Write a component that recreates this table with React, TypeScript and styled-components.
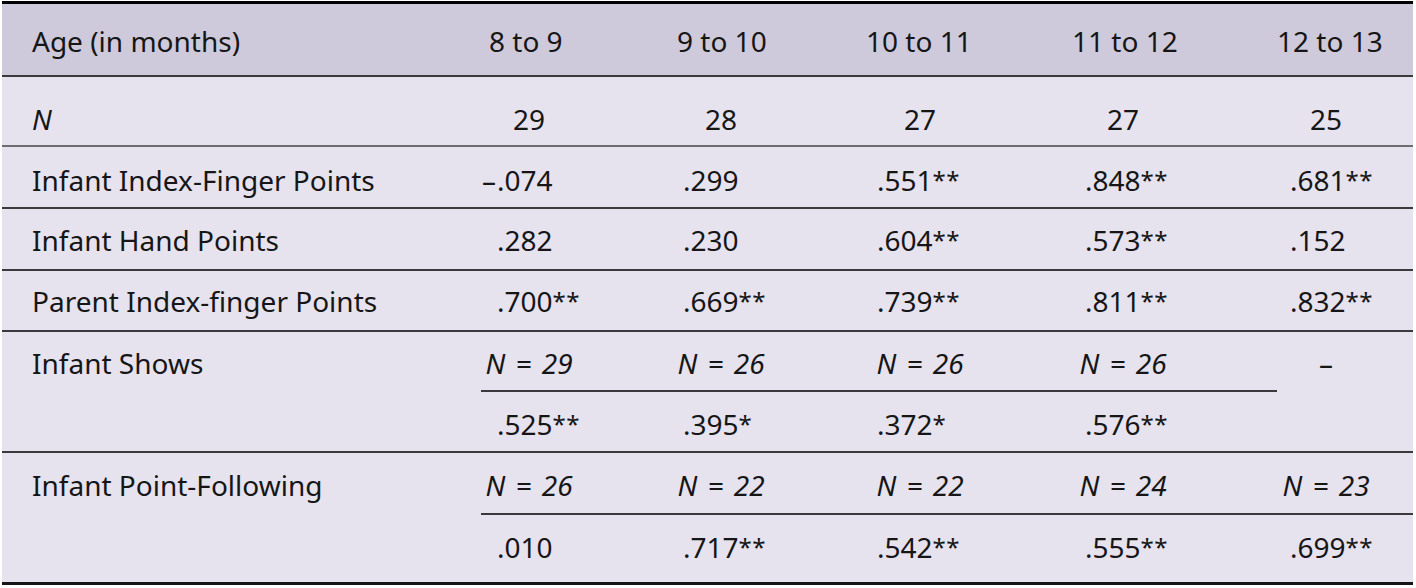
import React from "react";
import styled, { createGlobalStyle } from "styled-components";

const Global = createGlobalStyle`
  html, body { margin: 0; padding: 0; background: #ffffff; }
  body { font-family: "Noto Sans", "Open Sans", sans-serif; color: #161616; }
`;

const COLS = "479px 195px 190px 205px 206px 136px";
const NX = [4, 1, 10, 8, 5];
const VX = [16, 7, 11, 14, 13];
const HX = [8, 1, 0, 1, 0];

const Page = styled.div`
  padding: 1px 0 0 2px;
`;

const Table = styled.div`
  width: 1411px;
  background: #e6e3ee;
  border-top: 3px solid #000;
  border-bottom: 3px solid #151515;
`;

const Row = styled.div<{ $h: number; $line: string; $bg?: string }>`
  display: grid;
  grid-template-columns: ${COLS};
  height: ${(p) => p.$h}px;
  border-bottom: ${(p) => p.$line};
  background: ${(p) => p.$bg ?? "transparent"};
`;

const GroupRow = styled.div<{ $rows: string; $line: string }>`
  display: grid;
  grid-template-columns: ${COLS};
  grid-template-rows: ${(p) => p.$rows};
  border-bottom: ${(p) => p.$line};
`;

const Cell = styled.div<{ $pt: number; $line?: boolean; $col?: number; $row?: string }>`
  box-sizing: border-box;
  padding-top: ${(p) => p.$pt}px;
  font-size: 28px;
  line-height: 30px;
  white-space: nowrap;
  border-bottom: ${(p) => (p.$line ? "2px solid #3a3a3c" : "none")};
  ${(p) => (p.$col ? `grid-column: ${p.$col};` : "")}
  ${(p) => (p.$row ? `grid-row: ${p.$row};` : "")}
`;

const Label = styled(Cell)`
  padding-left: 30px;
`;

const HeadText = styled.div<{ $hx: number }>`
  padding-left: ${(p) => p.$hx}px;
`;

const Box = styled.div<{ $nx: number; $italic?: boolean }>`
  margin-left: ${(p) => p.$nx}px;
  width: 88px;
  text-align: center;
  font-style: ${(p) => (p.$italic ? "italic" : "normal")};
  word-spacing: ${(p) => (p.$italic ? "3px" : "0")};
`;

const Val = styled.div<{ $vx: number }>`
  padding-left: ${(p) => p.$vx}px;
`;

const Minus = styled.span`
  display: inline-block;
  width: 15px;
  margin-left: -15px;
`;

const Stars = styled.span`
  font-size: 0.86em;
  vertical-align: 2px;
  letter-spacing: 0.5px;
`;

const Em = styled.span`
  font-style: italic;
`;

const LINE = "2px solid #3a3a3c";
const GRAY_LINE = "2px solid #6e6d72";

const headers = ["8 to 9", "9 to 10", "10 to 11", "11 to 12", "12 to 13"];
const ns = ["29", "28", "27", "27", "25"];

const simpleRows: { label: string; values: string[]; pt: number; h: number }[] = [
  { label: "Infant Index-Finger Points", values: ["–.074", ".299", ".551**", ".848**", ".681**"], pt: 18, h: 60 },
  { label: "Infant Hand Points", values: [".282", ".230", ".604**", ".573**", ".152"], pt: 16, h: 60 },
  { label: "Parent Index-finger Points", values: [".700**", ".669**", ".739**", ".811**", ".832**"], pt: 15, h: 59 },
];

function Value({ v, i }: { v: string; i: number }) {
  const neg = v.startsWith("–");
  const body = neg ? v.slice(1) : v;
  const starIdx = body.indexOf("*");
  const num = starIdx >= 0 ? body.slice(0, starIdx) : body;
  const stars = starIdx >= 0 ? body.slice(starIdx) : "";
  return (
    <Val $vx={VX[i]}>
      {neg && <Minus>–</Minus>}
      {num}
      {stars && <Stars>{stars}</Stars>}
    </Val>
  );
}

export default function App() {
  return (
    <>
      <Global />
      <Page>
        <Table>
          <Row $h={71} $line={LINE} $bg="#cecadb">
            <Label $pt={22}>Age (in months)</Label>
            {headers.map((h, i) => (
              <Cell key={h} $pt={22}>
                <HeadText $hx={HX[i]}>{h}</HeadText>
              </Cell>
            ))}
          </Row>
          <Row $h={68} $line={GRAY_LINE}>
            <Label $pt={27}>
              <Em>N</Em>
            </Label>
            {ns.map((n, i) => (
              <Cell key={i} $pt={27}>
                <Box $nx={NX[i]}>{n}</Box>
              </Cell>
            ))}
          </Row>
          {simpleRows.map((r) => (
            <Row key={r.label} $h={r.h} $line={LINE}>
              <Label $pt={r.pt}>{r.label}</Label>
              {r.values.map((v, i) => (
                <Cell key={i} $pt={r.pt}>
                  <Value v={v} i={i} />
                </Cell>
              ))}
            </Row>
          ))}
          <GroupRow $rows="60px 59px" $line={LINE}>
            <Label $pt={16} $col={1} $row="1 / 3">
              Infant Shows
            </Label>
            {["29", "26", "26", "26"].map((n, i) => (
              <Cell key={"sn" + i} $pt={16} $line $col={i + 2} $row="1">
                <Box $nx={NX[i]} $italic>
                  N = {n}
                </Box>
              </Cell>
            ))}
            <Cell $pt={16} $col={6} $row="1 / 3">
              <Box $nx={NX[4]}>–</Box>
            </Cell>
            {[".525**", ".395*", ".372*", ".576**"].map((v, i) => (
              <Cell key={"sv" + i} $pt={17} $col={i + 2} $row="2">
                <Value v={v} i={i} />
              </Cell>
            ))}
          </GroupRow>
          <GroupRow $rows="62px 67px" $line="none">
            <Label $pt={17} $col={1} $row="1 / 3">
              Infant Point-Following
            </Label>
            {["26", "22", "22", "24", "23"].map((n, i) => (
              <Cell key={"pn" + i} $pt={17} $line $col={i + 2} $row="1">
                <Box $nx={NX[i]} $italic>
                  N = {n}
                </Box>
              </Cell>
            ))}
            {[".010", ".717**", ".542**", ".555**", ".699**"].map((v, i) => (
              <Cell key={"pv" + i} $pt={17} $col={i + 2} $row="2">
                <Value v={v} i={i} />
              </Cell>
            ))}
          </GroupRow>
        </Table>
      </Page>
    </>
  );
}
